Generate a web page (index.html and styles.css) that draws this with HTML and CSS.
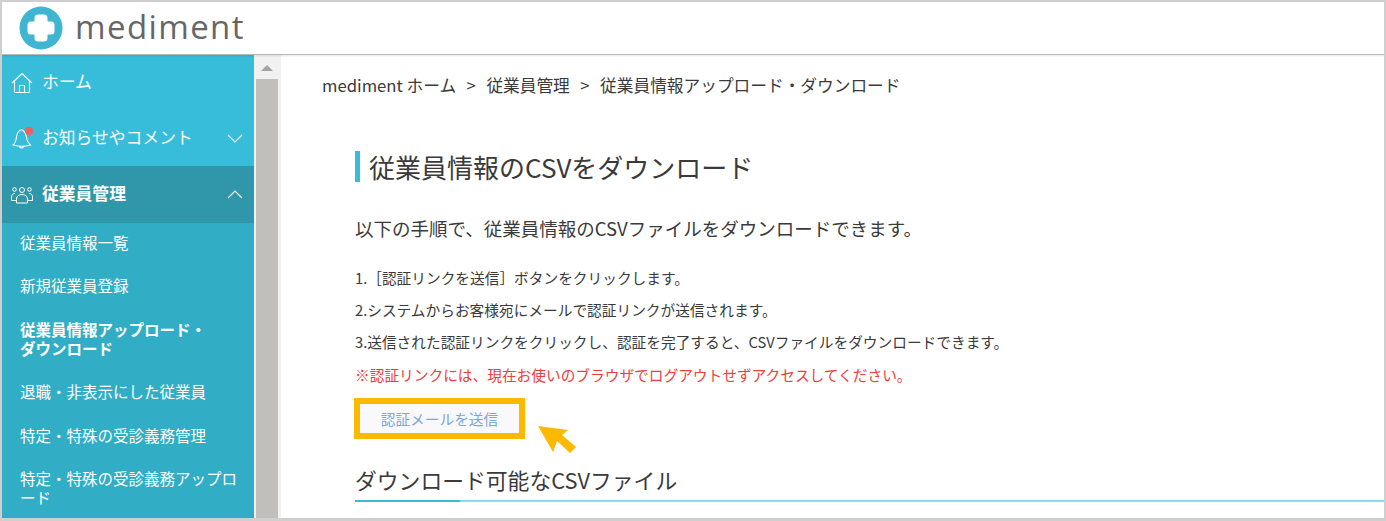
FILE: index.html
```html
<!DOCTYPE html>
<html lang="ja">
<head>
    <meta charset="UTF-8">
    <title>mediment</title>
    <link rel="stylesheet" href="styles.css">
</head>
<body>
<div class="frame">
    <header class="topbar">
        <svg class="logo-mark" width="44" height="44" viewBox="0 0 44 44">
            <circle cx="22" cy="22" r="21.5" fill="#3fb5d1"/>
            <path d="M15.500 12a3.500 3.500 0 0 1 3.500-3.500h6a3.500 3.500 0 0 1 3.500 3.500v3.500H32a3.500 3.500 0 0 1 3.500 3.500v6a3.500 3.500 0 0 1-3.500 3.500h-3.500V32a3.500 3.500 0 0 1-3.500 3.500h-6a3.500 3.500 0 0 1-3.500-3.500v-3.500H12A3.500 3.500 0 0 1 8.500 25v-6a3.500 3.500 0 0 1 3.500-3.500h3.500z" fill="#fff"/>
        </svg>
        <span class="logo-text">mediment</span>
    </header>
    <div class="body">
        <nav class="sidebar">
            <a class="nav-top nav-home">
                <svg class="nav-icon" width="22" height="22" viewBox="0 0 22 22" fill="none" stroke="#fff" stroke-width="1.1">
                    <path d="M1 11 11 1.500 21 11M3.500 9v10.500a1 1 0 0 0 1 1h13a1 1 0 0 0 1-1V9M8.500 20.500v-7h5v7"/>
                </svg>
                <span class="nav-label">ホーム</span>
            </a>
            <a class="nav-top nav-notice">
                <span class="icon-wrap">
                    <svg class="nav-icon" width="22" height="22" viewBox="0 0 22 22" fill="none" stroke="#fff" stroke-width="1.1">
                        <path d="M2 18c2.500-2 3-4 3.500-8C6 6 8 3.500 10.500 2.500 13 4 15 6.500 15.500 10c.5 4 1.500 6 4 8-5 1.500-12.500 1.500-17.500 0zM8.500 19.500c.5 2 3.500 2 4 0"/>
                    </svg>
                    <span class="badge"></span>
                </span>
                <span class="nav-label">お知らせやコメント</span>
                <svg class="chevron" width="16" height="9" viewBox="0 0 16 9" fill="none" stroke="#fff" stroke-width="1.1"><path d="M1 1l7 7 7-7"/></svg>
            </a>
            <a class="nav-top nav-open">
                <svg class="nav-icon" width="22" height="18" viewBox="0 0 22 18" fill="none" stroke="#fff" stroke-width="1">
                    <circle cx="11" cy="4" r="2.500"/><circle cx="3.500" cy="3.500" r="1.800"/><circle cx="18.500" cy="3.500" r="1.800"/>
                    <path d="M5.500 17v-4c0-3 2.500-4.500 5.500-4.500s5.500 1.500 5.500 4.500v4zM4 7.500c-2 0-3.500 1-3.500 3.500v3.500h5M18 7.500c2 0 3.500 1 3.500 3.500v3.500h-5"/>
                </svg>
                <span class="nav-label">従業員管理</span>
                <svg class="chevron" width="16" height="9" viewBox="0 0 16 9" fill="none" stroke="#fff" stroke-width="1.1"><path d="M1 8l7-7 7 7"/></svg>
            </a>
            <ul class="subnav">
                <li>従業員情報一覧</li>
                <li>新規従業員登録</li>
                <li class="current">従業員情報アップロード・<br>ダウンロード</li>
                <li>退職・非表示にした従業員</li>
                <li>特定・特殊の受診義務管理</li>
                <li>特定・特殊の受診義務アップロード</li>
            </ul>
        </nav>
        <div class="scrollbar">
            <span class="scroll-up"></span>
            <div class="scroll-thumb"></div>
        </div>
        <main class="content">
            <p class="crumbs">
                <span>mediment ホーム</span><span>&gt;</span>
                <span>従業員管理</span><span>&gt;</span>
                <span>従業員情報アップロード・ダウンロード</span>
            </p>
            <h1 class="page-title">従業員情報のCSVをダウンロード</h1>
            <p class="lead">以下の手順で、従業員情報のCSVファイルをダウンロードできます。</p>
            <p class="step">1.［認証リンクを送信］ボタンをクリックします。</p>
            <p class="step">2.システムからお客様宛にメールで認証リンクが送信されます。</p>
            <p class="step">3.送信された認証リンクをクリックし、認証を完了すると、CSVファイルをダウンロードできます。</p>
            <p class="step note">※認証リンクには、現在お使いのブラウザでログアウトせずアクセスしてください。</p>
            <div class="send-row">
                <button class="send-btn">認証メールを送信</button>
                <svg class="arrow" width="38" height="27" viewBox="0 0 38 27">
                    <path d="M0 0 30 4 24 9 38 21 32 27 19 15 15 26z" fill="#fdb900"/>
                </svg>
            </div>
            <h2 class="sub-title">ダウンロード可能なCSVファイル</h2>
        </main>
    </div>
</div>
</body>
</html>
```

FILE: styles.css
```css
* { box-sizing: border-box; }
html, body { margin: 0; height: 100%; overflow: hidden; }
body {
    font-family: "Noto Sans CJK JP", "Noto Sans", sans-serif;
    background-color: #fff;
    color: #3a3a3a;
}
.frame {
    height: 521px;
    display: flex;
    flex-direction: column;
    border: 2px solid #cfcfcf;
    border-bottom-width: 3px;
    overflow: hidden;
}
.topbar {
    height: 53px;
    flex: none;
    display: flex;
    align-items: center;
    gap: 12px;
    padding-left: 17px;
    border-bottom: 1px solid #b5b9b7;
    box-shadow: 0 1px 2px rgba(0,0,0,0.1);
    position: relative;
}
.logo-text {
    font-family: "Open Sans", sans-serif;
    font-size: 33px;
    line-height: 44px;
    letter-spacing: 1.4px;
    color: #666;
    margin-bottom: 2px;
}
.body { flex: 1; display: flex; min-height: 0; }

/* sidebar */
.sidebar {
    width: 252px;
    flex: none;
    color: #fff;
    background-color: #31aec6;
    overflow: hidden;
}
.nav-top {
    display: flex;
    align-items: center;
    height: 56px;
    padding-left: 9px;
    background-color: #37bcd9;
    font-size: 16.800px;
}
.nav-label { margin: 0 0 3px 9px; }
.nav-home { height: 55px; }
.nav-notice { height: 56px; }
.nav-open { height: 57px; background-color: #3097aa; font-weight: 700; }
.nav-open .nav-label { margin-bottom: 4px; }
.icon-wrap { display: flex; position: relative; }
.badge {
    position: absolute;
    top: 0;
    right: 0;
    width: 8px;
    height: 8px;
    border-radius: 50%;
    background-color: #f0605c;
}
.chevron { margin-left: auto; margin-right: 11px; }
.subnav {
    list-style: none;
    margin: 0;
    padding: 0 12px 0 18px;
    font-size: 15.500px;
    line-height: 19.500px;
}
.subnav li { margin-top: 23.800px; }
.subnav li:first-child { margin-top: 10px; }
.subnav .current { font-weight: 700; }

/* scrollbar */
.scrollbar {
    width: 27px;
    flex: none;
    padding: 0 3px 0 2px;
    background-color: #f1f1f1;
    display: flex;
    flex-direction: column;
    align-items: center;
}
.scroll-up {
    margin: 10px 0 8px;
    border-left: 6px solid transparent;
    border-right: 6px solid transparent;
    border-bottom: 6px solid #a3a3a3;
}
.scroll-thumb { width: 22px; flex: 1; background-color: #c1bfbc; }

/* content */
.content { flex: 1; padding: 18px 0 0 41px; min-width: 0; }
.content p { margin: 0; }
.crumbs { display: flex; gap: 10.500px; font-size: 16.700px; line-height: 24px; }
.page-title {
    margin: 54px 0 0 33px;
    padding-left: 9px;
    border-left: 5px solid #37bcd9;
    font-size: 26px;
    font-weight: 400;
    line-height: 31px;
}
.content .lead { margin: 32px 0 0 33px; font-size: 18.500px; line-height: 28px; }
.content .step { margin-left: 33px; font-size: 14.700px; line-height: 32.400px; }
.content .lead + .step { margin-top: 19.500px; }
.note { color: #ee3d3d; }
.send-row { display: flex; margin: 6.500px 0 0 32px; }
.send-btn {
    width: 171px;
    height: 41px;
    padding: 0;
    border: 6px solid #fdb900;
    background-color: #f9f9fb;
    color: #7ba7e0;
    font-family: inherit;
    font-size: 14.700px;
}
.arrow { margin: 28px 0 0 13px; }
.sub-title {
    margin: 11px 0 0 33px;
    padding-bottom: 4px;
    font-size: 21.800px;
    font-weight: 400;
    line-height: 32px;
    border-bottom: 2px solid #84deef;
    position: relative;
}
.sub-title::after {
    content: "";
    position: absolute;
    left: 0;
    bottom: -2px;
    width: 105px;
    height: 2px;
    background-color: #37bcd9;
}
```
